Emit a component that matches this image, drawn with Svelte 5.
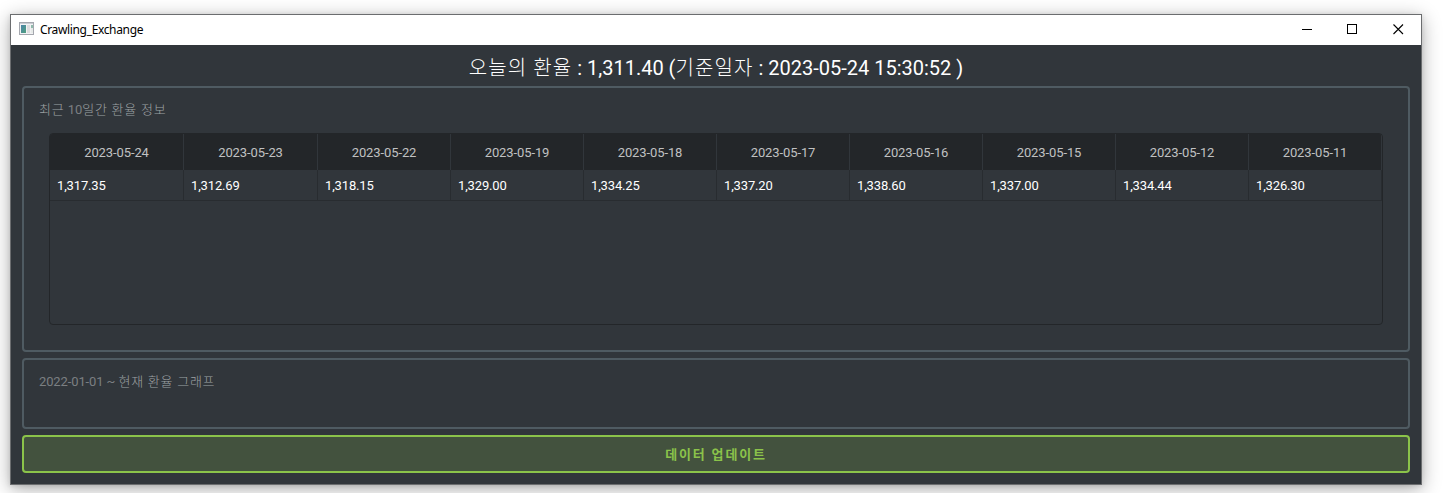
<script>
  const rates = [
    ['2023-05-24', '1,317.35'],
    ['2023-05-23', '1,312.69'],
    ['2023-05-22', '1,318.15'],
    ['2023-05-19', '1,329.00'],
    ['2023-05-18', '1,334.25'],
    ['2023-05-17', '1,337.20'],
    ['2023-05-16', '1,338.60'],
    ['2023-05-15', '1,337.00'],
    ['2023-05-12', '1,334.44'],
    ['2023-05-11', '1,326.30'],
  ];
</script>

<div class="desktop">
  <div class="window">
    <header class="titlebar">
      <svg class="app-icon" width="16" height="14" viewBox="0 0 16 14" shape-rendering="crispEdges">
        <defs>
          <linearGradient id="pane" x1="0" y1="0" x2="1" y2="1">
            <stop offset="0" stop-color="#4a83a8" />
            <stop offset="1" stop-color="#4fa07e" />
          </linearGradient>
        </defs>
        <rect x="0.5" y="0.5" width="14" height="12" fill="#f2f2f4" stroke="#a5a8af" />
        <rect x="1" y="1" width="13" height="1" fill="#c9ccd2" />
        <rect x="2" y="3" width="5" height="8" fill="url(#pane)" />
        <rect x="8" y="3" width="3" height="8" fill="#dcdcde" />
        <rect x="12" y="3" width="2" height="3" fill="#8fb9ab" />
        <rect x="12" y="6" width="2" height="5" fill="#e6eae8" />
      </svg>
      <span class="title">Crawling_Exchange</span>
      <div class="controls">
        <svg width="11" height="11" viewBox="0 0 11 11" shape-rendering="crispEdges"><path d="M0 5.5h10" stroke="#000" /></svg>
        <svg width="11" height="11" viewBox="0 0 11 11" shape-rendering="crispEdges"><rect x="0.5" y="0.5" width="9" height="9" fill="none" stroke="#000" /></svg>
        <svg width="11" height="11" viewBox="0 0 11 11"><path d="M0.5 0.5l9.5 9.5M10 0.5l-9.5 9.5" stroke="#000" stroke-width="1.1" /></svg>
      </div>
    </header>
    <main>
      <h1><span class="ko">오늘의 환율</span> : 1,311.40 (<span class="ko">기준일자</span> : 2023-05-24 15:30:52 )</h1>
      <section class="group recent">
        <h2><span class="ko">최근</span> 10<span class="ko">일간 환율 정보</span></h2>
        <div class="table">
          <div class="row head">
            {#each rates as [date]}<div>{date}</div>{/each}
          </div>
          <div class="row body">
            {#each rates as [, value]}<div>{value}</div>{/each}
          </div>
        </div>
      </section>
      <section class="group graph">
        <h2><span class="since">2022-01-01 ~</span> <span class="ko">현재 환율 그래프</span></h2>
      </section>
      <button><span class="ko">데이터 업데이트</span></button>
    </main>
  </div>
</div>

<style>
  :global(body) {
    background: #fff;
    overflow: hidden;
  }
  .desktop {
    box-sizing: border-box;
    height: 493px;
    padding: 14px 26px 8px 10px;
    overflow: hidden;
    font-family: Roboto, 'Noto Sans CJK KR', sans-serif;
  }
  .window {
    box-sizing: border-box;
    width: 1412px;
    height: 471px;
    display: flex;
    flex-direction: column;
    border: 1px solid #6b6d6f;
    background: #31363b;
    box-shadow: 0 4px 18px rgba(0, 0, 0, 0.32), 0 1px 5px rgba(0, 0, 0, 0.12);
  }
  .titlebar {
    box-sizing: border-box;
    height: 30px;
    flex: none;
    display: flex;
    align-items: center;
    padding: 0 17px 0 8px;
    background: #fff;
    color: #000;
    font: 12px 'Noto Sans', sans-serif;
  }
  .app-icon {
    margin-bottom: 2px;
  }
  .title {
    margin: 0 0 2px 5px;
    letter-spacing: -0.35px;
  }
  .controls {
    margin-left: auto;
    display: flex;
    gap: 35px;
  }
  .controls svg {
    display: block;
    margin-top: -1px;
  }
  .controls svg:nth-child(2) {
    margin-left: -1px;
  }
  main {
    flex: 1;
    display: flex;
    flex-direction: column;
    padding: 5px 11px 11px;
  }
  h1 {
    margin: 0 0 1px;
    height: 35px;
    line-height: 37px;
    font-size: 20px;
    font-weight: 400;
    color: #fff;
    text-align: center;
    white-space: pre;
  }
  h1 .ko {
    letter-spacing: 1.1px;
    font-weight: 300;
  }
  .group {
    box-sizing: border-box;
    border: 2px solid #4f5b62;
    border-radius: 4px;
    margin-bottom: 6px;
    padding: 12px 25px 0;
  }
  .recent {
    height: 266px;
  }
  .graph {
    height: 71px;
  }
  h2 {
    margin: 0 0 0 -10px;
    height: 20px;
    line-height: 20px;
    font-size: 13px;
    font-weight: 400;
    color: #7b7f82;
    white-space: pre;
  }
  h2 .ko {
    letter-spacing: 0.75px;
    font-weight: 300;
    color: #9fa2a4;
  }
  .since {
    letter-spacing: -0.12px;
  }
  .table {
    box-sizing: border-box;
    height: 192px;
    margin-top: 13px;
    border: 1px solid #232629;
    border-radius: 4px;
    overflow: hidden;
    font-size: 13px;
  }
  .row {
    display: grid;
    grid-template-columns: 134px 134px repeat(8, 133px);
  }
  .row div {
    box-sizing: border-box;
    border-right: 1px solid #31363b;
  }
  .head {
    height: 36px;
    line-height: 38px;
    background: #232629;
    color: #c0c1c2;
    text-align: center;
    letter-spacing: -0.1px;
  }
  .body {
    box-sizing: border-box;
    height: 31px;
    line-height: 31px;
    color: #fff;
    border-bottom: 1px solid #282c30;
    letter-spacing: -0.15px;
  }
  .body div {
    border-right-color: #282c30;
    padding-left: 7px;
  }
  button {
    box-sizing: border-box;
    height: 38px;
    border: 2px solid #8bc34a;
    border-radius: 4px;
    background: #43523e;
    color: #8bc34a;
    font: 700 13px/36px Roboto, 'Noto Sans CJK KR', sans-serif;
    padding: 0;
  }
  button .ko {
    letter-spacing: 1.8px;
  }
</style>
